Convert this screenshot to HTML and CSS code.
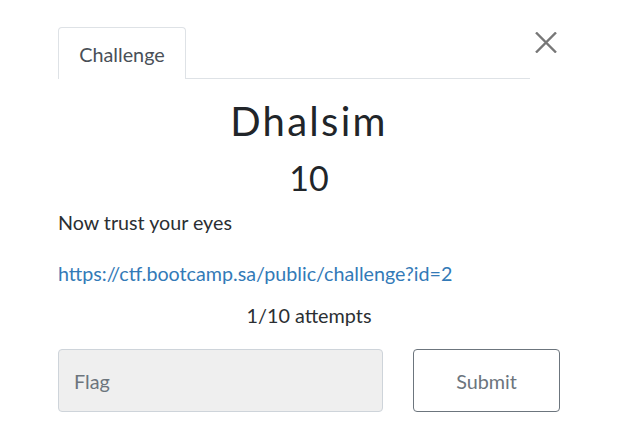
FILE: index.html
```html
<!DOCTYPE html>
<html>
<head>
<meta charset="utf-8">
<link rel="stylesheet" href="styles.css">
</head>
<body>
<div class="modal">
  <div class="top">
    <div class="tabs">
      <div class="tab">Challenge</div>
    </div>
    <button class="close" aria-label="Close">
      <svg width="22" height="21" viewBox="0 0 22 21"><path d="M1 0.5 L21 20.5 M21 0.5 L1 20.5" stroke="#777" stroke-width="2.4" fill="none"/></svg>
    </button>
  </div>
  <h2 class="name">Dhalsim</h2>
  <h3 class="value">10</h3>
  <p class="desc">Now trust your eyes</p>
  <p class="link"><a href="#">https://ctf.bootcamp.sa/public/challenge?id=2</a></p>
  <p class="attempts">1/10 attempts</p>
  <div class="submit-row">
    <div class="flag">Flag</div>
    <button class="submit">Submit</button>
  </div>
</div>
</body>
</html>
```
FILE: styles.css
```css
html, body { margin: 0; padding: 0; background: #fff; }
body { font-family: Lato, "Open Sans", sans-serif; color: #212529; }
.modal { padding: 27px 59px 0 58px; }
.top { display: flex; align-items: flex-start; }
.tabs { flex: 1; display: flex; border-bottom: 1px solid #dee2e6; margin-right: 5px; }
.tab { box-sizing: border-box; width: 128px; border: 1px solid #dee2e6; border-bottom: none; border-radius: 4px 4px 0 0; height: 52px; padding-top: 1px; line-height: 51px; font-size: 19.8px; color: #495057; margin-bottom: -1px; background: #fff; text-align: center; }
.close { border: none; background: none; padding: 0; margin: 5px 3px 0 0; width: 22px; height: 21px; }
.close svg { display: block; }
.name { margin: 18px 0 0; font-size: 40px; font-weight: 400; text-align: center; letter-spacing: 2.3px; line-height: 48px; }
.value { margin: 12px 0 0; font-size: 34px; font-weight: 400; text-align: center; line-height: 41px; }
.desc { margin: 13px 0 0; font-size: 19.7px; line-height: 24px; color: #2b2f33; }
.link { margin: 27px 0 0; font-size: 19.7px; line-height: 24px; }
.link a { color: #337ab7; text-decoration: none; }
.attempts { margin: 17px 0 0; font-size: 19.8px; line-height: 24px; text-align: center; color: #2b2f33; }
.submit-row { display: flex; gap: 30px; margin-top: 22px; }
.flag { width: 325px; box-sizing: border-box; height: 63px; border: 1px solid #ced4da; border-radius: 4px; background: #efefef; color: #6c757d; font-size: 19.8px; line-height: 61px; padding: 1px 0 0 15px; }
.submit { width: 147px; height: 63px; box-sizing: border-box; border: 1px solid #6c757d; border-radius: 4px; background: #fff; color: #6c757d; font-family: inherit; font-size: 19.8px; padding: 1px 0 0; }
```
